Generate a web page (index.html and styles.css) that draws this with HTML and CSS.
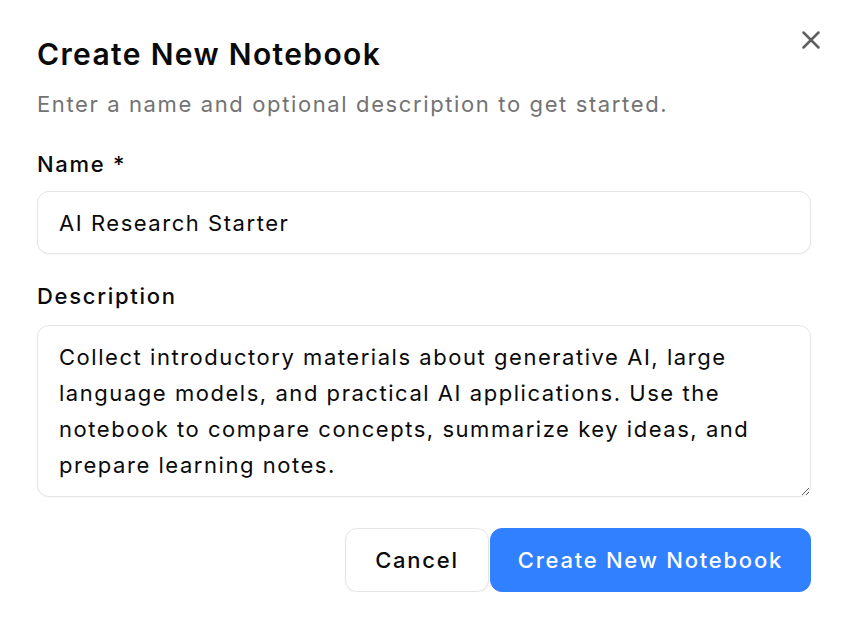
FILE: index.html
```html
<!DOCTYPE html>
<html lang="en">

<head>
    <meta charset="UTF-8">
    <meta name="viewport" content="width=device-width, initial-scale=1.0">
    <title>Create New Notebook</title>
    <link rel="stylesheet" href="styles.css">
</head>

<body>
    <div class="dialog">
        <button class="close" aria-label="Close">
            <svg viewBox="0 0 24 24" fill="none" stroke="currentColor" stroke-width="2" stroke-linecap="round" stroke-linejoin="round">
                <path d="M18 6 6 18"></path>
                <path d="m6 6 12 12"></path>
            </svg>
        </button>

        <div class="header">
            <h2 class="title">Create New Notebook</h2>
            <p class="subtitle">Enter a name and optional description to get started.</p>
        </div>

        <form class="form">
            <div class="field">
                <label for="name">Name *</label>
                <input id="name" type="text" value="AI Research Starter">
            </div>
            <div class="field">
                <label for="desc">Description</label>
                <textarea id="desc" rows="4">Collect introductory materials about generative AI, large language models, and practical AI applications. Use the notebook to compare concepts, summarize key ideas, and prepare learning notes.</textarea>
            </div>
            <div class="actions">
                <button type="button" class="btn btn-outline">Cancel</button>
                <button type="button" class="btn btn-primary">Create New Notebook</button>
            </div>
        </form>
    </div>
</body>

</html>
```

FILE: styles.css
```css
body {
    margin: 0;
    padding: 0;
    background: #fff;
    color: #0a0a0a;
    font-family: Inter, "Noto Sans", sans-serif;
    letter-spacing: 0.07em;
}

.dialog {
    position: relative;
    padding: 36px 35px 0 37px;
}

.close {
    position: absolute;
    top: 25px;
    right: 20px;
    width: 30px;
    height: 30px;
    padding: 0;
    border: none;
    background: none;
    color: #5f5f5f;
    cursor: pointer;
}

.close svg {
    display: block;
    width: 30px;
    height: 30px;
}

.title {
    margin: 0;
    font-size: 30px;
    line-height: 36px;
    font-weight: 600;
    letter-spacing: 1.35px;
}

.subtitle {
    margin: 17px 0 0;
    font-size: 22px;
    line-height: 30px;
    letter-spacing: 1.62px;
    color: #737373;
}

.form {
    display: flex;
    flex-direction: column;
    gap: 27px;
    margin-top: 30px;
}

.field {
    display: flex;
    flex-direction: column;
    gap: 12px;
}

.field label {
    font-size: 22px;
    line-height: 30px;
    font-weight: 500;
    letter-spacing: 1.72px;
}

.field textarea {
    margin-top: 2px;
}

input,
textarea {
    box-sizing: border-box;
    width: 100%;
    border: 1px solid #e5e5e5;
    border-radius: 12px;
    background: #fff;
    color: #0a0a0a;
    font-family: inherit;
    font-size: 22px;
    letter-spacing: 0.07em;
    box-shadow: 0 1px 2px rgba(0, 0, 0, 0.04);
    outline: none;
}

input {
    height: 63px;
    padding: 0 21px;
}

textarea {
    height: 172px;
    padding: 13px 21px;
    line-height: 36px;
    resize: vertical;
}

.actions {
    display: flex;
    justify-content: flex-end;
    gap: 1px;
    margin-top: 4px;
}

.btn {
    height: 64px;
    border-radius: 12px;
    font-family: inherit;
    font-size: 22px;
    font-weight: 500;
    letter-spacing: 0.08em;
    cursor: pointer;
}

.btn-outline {
    padding: 0 29px;
    border: 1px solid #e5e5e5;
    background: #fff;
    color: #0a0a0a;
    box-shadow: 0 1px 2px rgba(0, 0, 0, 0.05);
}

.btn-primary {
    padding: 0 27px;
    border: 1px solid #3080ff;
    background: #3080ff;
    color: #fff;
}
```
